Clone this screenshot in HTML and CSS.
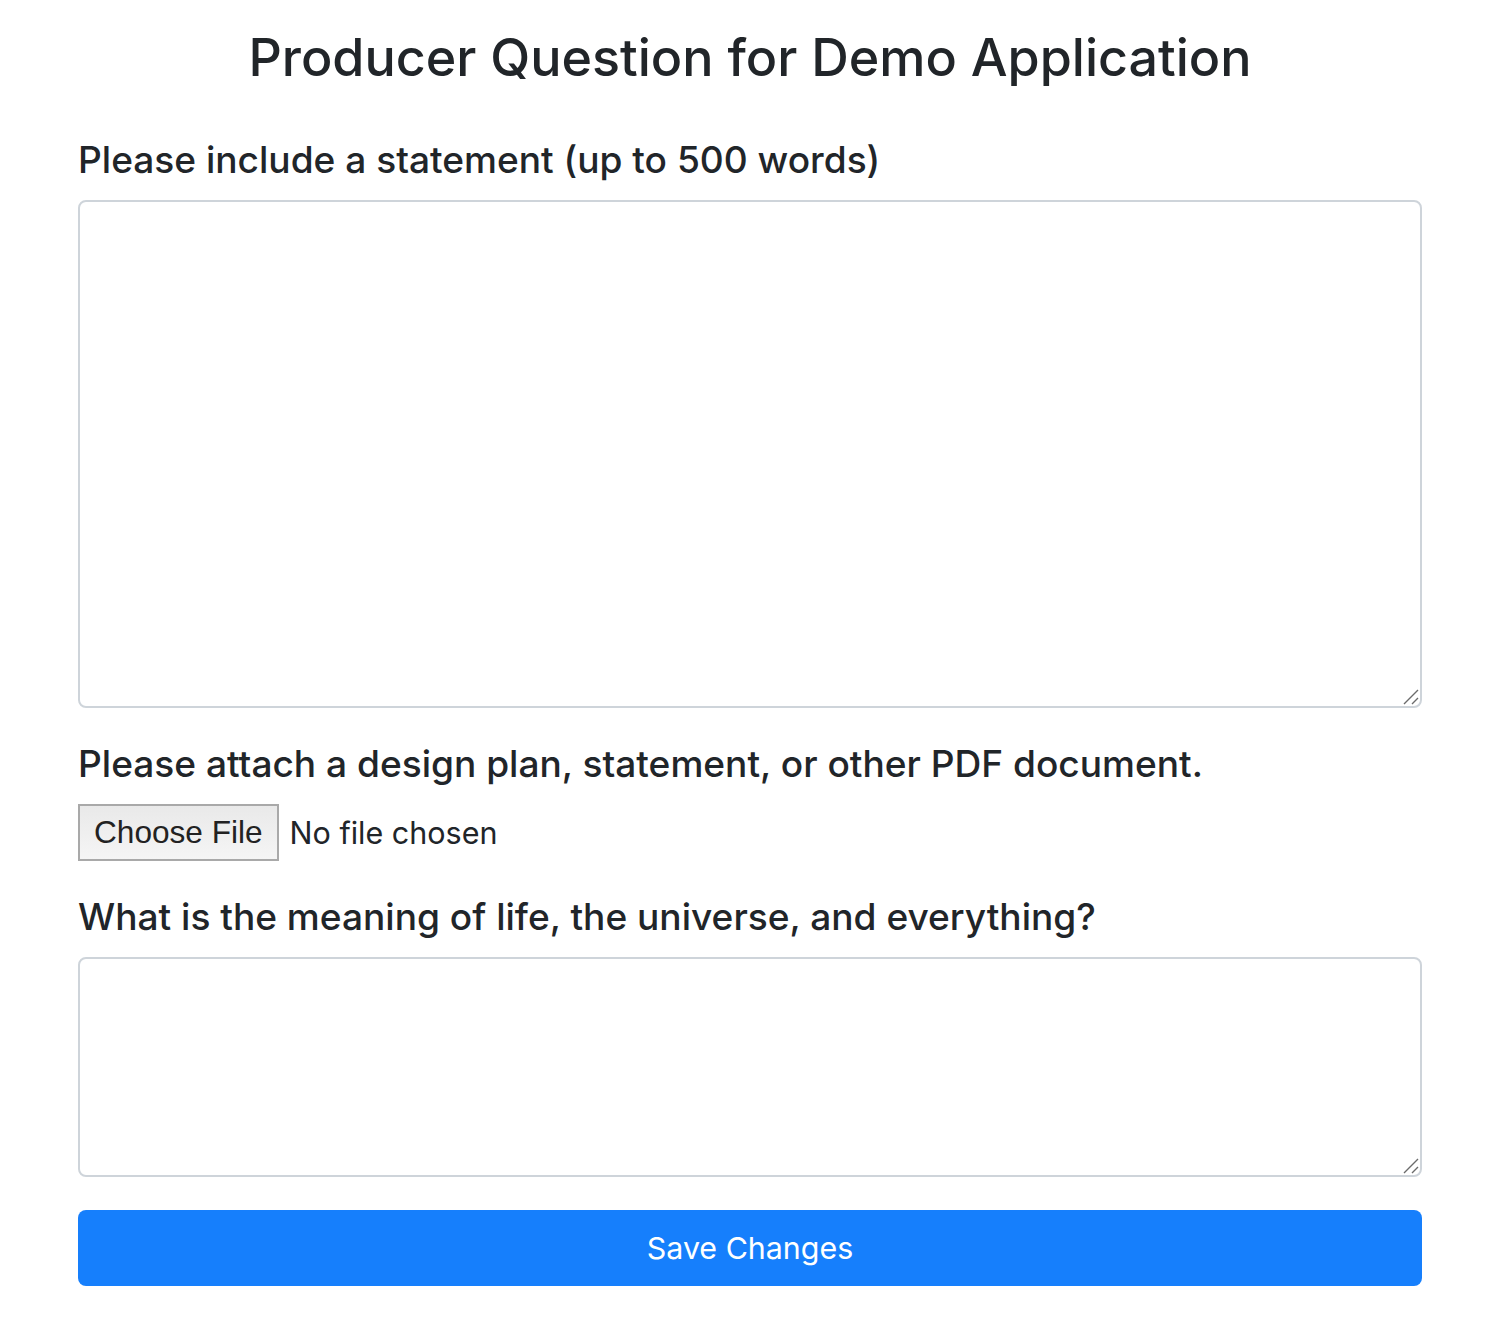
FILE: index.html
```html
<!DOCTYPE html>
<html lang="en">
<head>
<meta charset="utf-8">
<title>Producer Question for Demo Application</title>
<link rel="stylesheet" href="styles.css">
</head>
<body>
<main class="page">
  <h1 class="title">Producer Question for Demo Application</h1>
  <form class="form">
    <div class="field">
      <label class="label" for="statement">Please include a statement (up to 500 words)</label>
      <div class="ta-wrap">
        <textarea id="statement" class="textarea textarea-tall"></textarea>
        <svg class="grip" width="16" height="16" viewBox="0 0 16 16" aria-hidden="true"><path d="M1 15 L15 1 M9 15 L15 9" stroke="#6b6b6b" stroke-width="1.4" fill="none"/></svg>
      </div>
    </div>
    <div class="field">
      <label class="label" for="doc">Please attach a design plan, statement, or other PDF document.</label>
      <div class="file">
        <span class="file-btn">Choose File</span>
        <span class="file-name">No file chosen</span>
      </div>
    </div>
    <div class="field">
      <label class="label" for="meaning">What is the meaning of life, the universe, and everything?</label>
      <div class="ta-wrap">
        <textarea id="meaning" class="textarea textarea-short"></textarea>
        <svg class="grip" width="16" height="16" viewBox="0 0 16 16" aria-hidden="true"><path d="M1 15 L15 1 M9 15 L15 9" stroke="#6b6b6b" stroke-width="1.4" fill="none"/></svg>
      </div>
    </div>
    <button type="button" class="btn">Save Changes</button>
  </form>
</main>
</body>
</html>
```
FILE: styles.css
```css
html, body {
  margin: 0;
  padding: 0;
  background: #fff;
}
body {
  font-family: Inter, "Liberation Sans", sans-serif;
  color: #212529;
}
.page {
  padding: 0 74px 40px 78px;
}
.title {
  margin: 0;
  padding-top: 24px;
  text-align: center;
  font-size: 52px;
  font-weight: 500;
  line-height: 68px;
}
.form {
  display: flex;
  flex-direction: column;
  margin-top: 44px;
}
.field {
  display: flex;
  flex-direction: column;
}
.label {
  font-size: 37.1px;
  font-weight: 500;
  line-height: 48px;
  margin-bottom: 16px;
}
.ta-wrap {
  position: relative;
  margin-bottom: 32px;
}
.textarea {
  box-sizing: border-box;
  width: 100%;
  border: 2px solid #ced4da;
  border-radius: 8px;
  background: #fff;
  resize: none;
  font: inherit;
  margin: 0;
  display: block;
}
.grip {
  position: absolute;
  right: 3px;
  bottom: 3px;
}
.textarea-tall { height: 508px; }
.textarea-short { height: 220px; }
.file {
  display: flex;
  align-items: center;
  gap: 11px;
  margin-bottom: 32px;
}
.file-btn {
  box-sizing: border-box;
  height: 57px;
  padding: 0 14px 0 14px;
  display: flex;
  align-items: center;
  border: 2px solid #a9a9a9;
  background: linear-gradient(#e9e9e9, #f5f5f5);
  font-family: "Liberation Sans", sans-serif;
  font-size: 31.6px;
  color: #222;
}
.file-name {
  font-size: 30.5px;
  color: #212529;
}
.btn {
  box-sizing: border-box;
  width: 100%;
  height: 76px;
  margin-top: 1px;
  border: 0;
  border-radius: 8px;
  background: #167ffc;
  color: #fff;
  font-family: Inter, "Liberation Sans", sans-serif;
  font-size: 30.4px;
  font-weight: 400;
}
```
